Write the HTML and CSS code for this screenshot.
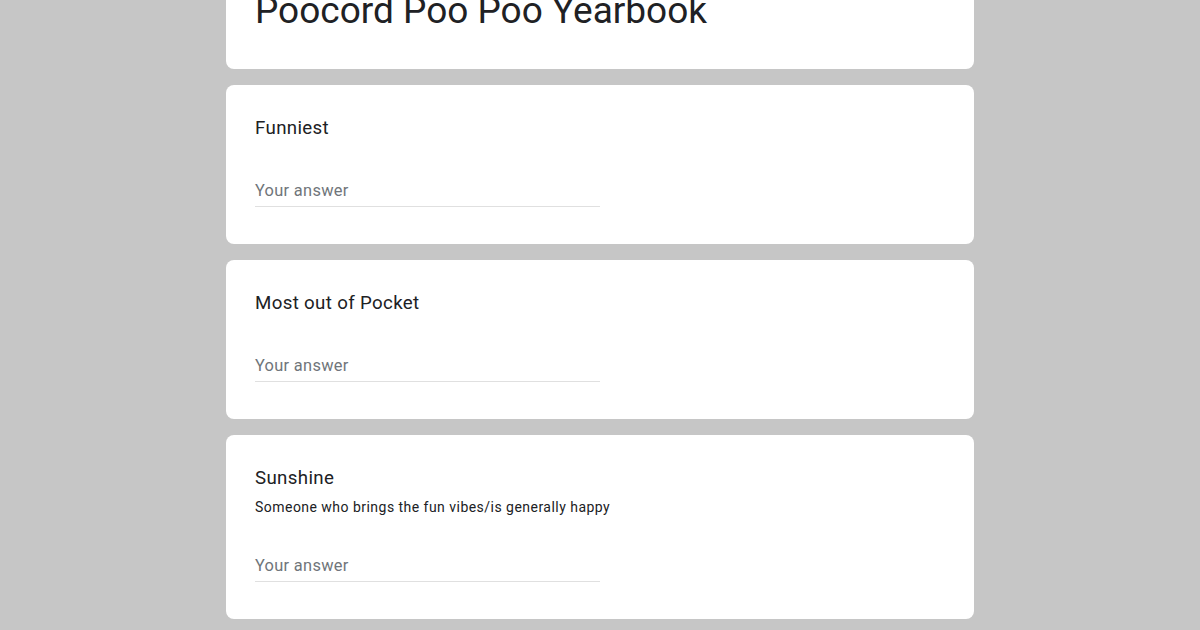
FILE: index.html
```html
<!DOCTYPE html>
<html lang="en">
<head>
<meta charset="utf-8">
<title>Poocord Poo Poo Yearbook</title>
<link rel="stylesheet" href="styles.css">
</head>
<body>
<main class="form">
  <section class="card header-card">
    <h1 class="form-title">Poocord Poo Poo Yearbook</h1>
  </section>
  <section class="card question">
    <div class="q-title">Funniest</div>
    <div class="answer">Your answer</div>
  </section>
  <section class="card question">
    <div class="q-title">Most out of Pocket</div>
    <div class="answer">Your answer</div>
  </section>
  <section class="card question">
    <div class="q-title">Sunshine</div>
    <div class="q-desc">Someone who brings the fun vibes/is generally happy</div>
    <div class="answer answer-after-desc">Your answer</div>
  </section>
</main>
</body>
</html>
```
FILE: styles.css
```css
html, body {
  margin: 0;
  padding: 0;
  background: #c6c6c6;
  overflow: hidden;
}
body {
  font-family: Roboto, "Liberation Sans", sans-serif;
  color: #202124;
}
.form {
  width: 748px;
  margin: 0 auto;
  display: flex;
  flex-direction: column;
  gap: 16px;
}
.card {
  background: #fff;
  border-radius: 8px;
  padding: 29px 28px 37px 29px;
}
.header-card {
  margin-top: -31px;
  padding-top: 20px;
  padding-bottom: 36px;
}
.form-title {
  margin: 0;
  font-weight: 400;
  font-size: 37px;
  line-height: 44px;
}
.q-title {
  font-size: 18.7px;
  line-height: 28px;
  letter-spacing: 0.35px;
}
.q-desc {
  margin-top: 5px;
  font-size: 14px;
  line-height: 20px;
  letter-spacing: 0.47px;
}
.answer {
  margin-top: 37px;
  width: 345px;
  font-size: 16.4px;
  line-height: 24px;
  letter-spacing: 0.3px;
  color: #70757a;
  padding-bottom: 3px;
  border-bottom: 1px solid #e0e0e0;
}
.answer-after-desc {
  margin-top: 37px;
}
```
